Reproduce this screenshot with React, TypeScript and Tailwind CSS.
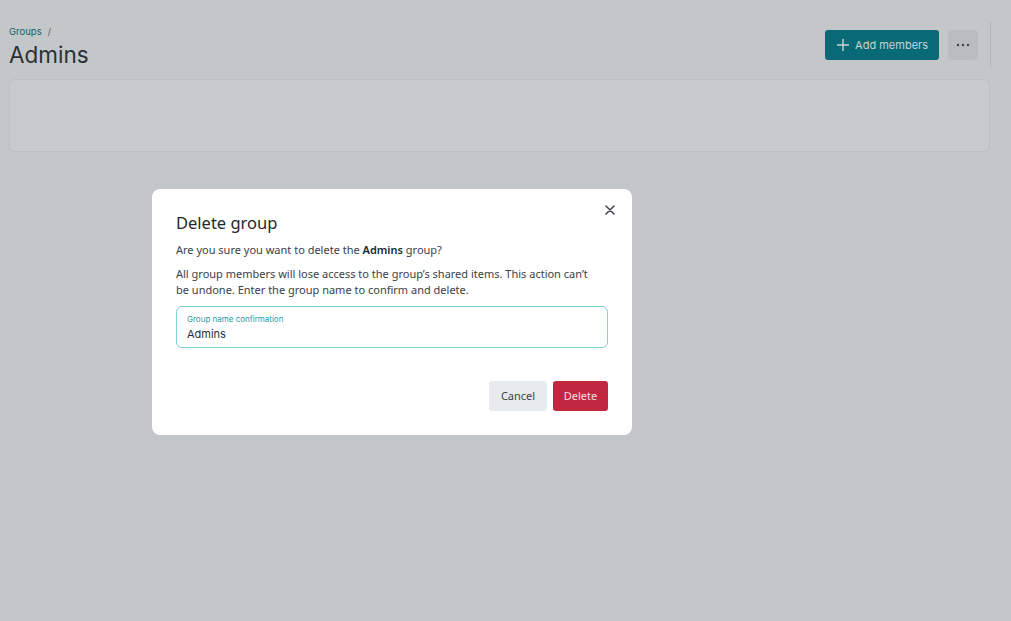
import React from "react";

export default function App() {
  return (
    <div
      className="relative h-[621px] w-full overflow-hidden bg-[#c3c7ca]"
      style={{ fontFamily: "Inter, 'Noto Sans', sans-serif" }}
    >
      <div className="flex pl-[9px] pr-[21px] pt-[22px]">
        <div className="flex flex-1 flex-col">
          <div className="flex items-start justify-between">
            <div className="flex flex-col pt-[4px]">
              <div className="flex items-center gap-[6px] text-[9.5px] leading-[12px]">
                <span className="text-[#0f5f68]">Groups</span>
                <span className="text-[#5a6068]">/</span>
              </div>
              <h1 className="mt-[4px] text-[22.5px] leading-[26px] text-[#2b3036]">Admins</h1>
            </div>
            <div className="mr-[12px] mt-[8px] flex items-center gap-[9px]">
              <button className="flex h-[30px] items-center gap-[5px] rounded-[3px] bg-[#086a74] pl-[11px] pr-[11px] text-[11px] text-[#c8d4d6]">
                <svg width="14" height="14" viewBox="0 0 14 14" fill="none" stroke="#c8d4d6" strokeWidth="1.4">
                  <path d="M7 1v12M1 7h12" />
                </svg>
                Add members
              </button>
              <button className="flex h-[30px] w-[30px] items-center justify-center rounded-[3px] bg-[#b9bdc0]">
                <svg width="14" height="4" viewBox="0 0 14 4" fill="#3e444a">
                  <circle cx="2" cy="2" r="1.2" />
                  <circle cx="7" cy="2" r="1.2" />
                  <circle cx="12" cy="2" r="1.2" />
                </svg>
              </button>
            </div>
          </div>
          <div className="mt-[11px] h-[73px] rounded-[6px] border border-[#bcbec1] bg-[#c9cacc]" />
        </div>
      </div>
      <div className="absolute left-[990px] top-[22px] h-[45px] w-px bg-[#b3b6b9]" />

      <div className="absolute left-[152px] top-[189px] flex w-[480px] flex-col rounded-[8px] bg-white px-[24px] pb-[24px] pt-[24px]" style={{ fontFamily: "'Noto Sans', Inter, sans-serif" }}>
        <button className="absolute right-[16px] top-[15px] flex h-[12px] w-[12px] items-center justify-center">
          <svg width="10" height="10" viewBox="0 0 10 10" stroke="#3a4048" strokeWidth="1.5" strokeLinecap="round">
            <path d="M1 1l8 8M9 1l-8 8" />
          </svg>
        </button>
        <h2 className="text-[16.5px] leading-[20px] text-[#22272d]">Delete group</h2>
        <p className="mt-[9px] text-[11px] leading-[16px] text-[#3a4048]">
          Are you sure you want to delete the <span className="font-semibold text-[#22272d]">Admins</span> group?
        </p>
        <p className="mt-[8px] pr-[14px] text-[11px] leading-[16px] text-[#3a4048]">
          All group members will lose access to the group’s shared items. This action can’t be undone. Enter the group name to confirm and delete.
        </p>
        <div className="mt-[8px] flex h-[42px] flex-col justify-center rounded-[6px] border border-[#7ed2d6] px-[10px]" style={{ fontFamily: "Inter, sans-serif" }}>
          <span className="text-[8px] leading-[10px] text-[#2a9aa3]">Group name confirmation</span>
          <span className="mt-[4px] text-[11px] leading-[13px] text-[#2b3036]">Admins</span>
        </div>
        <div className="mt-[33px] flex justify-end gap-[6px]">
          <button className="h-[30px] w-[58px] rounded-[3px] bg-[#e8ebee] text-[11px] text-[#3a4048]">Cancel</button>
          <button className="h-[30px] w-[55px] rounded-[3px] bg-[#c1283f] text-[11px] text-[#f3dfe2]">Delete</button>
        </div>
      </div>
    </div>
  );
}
